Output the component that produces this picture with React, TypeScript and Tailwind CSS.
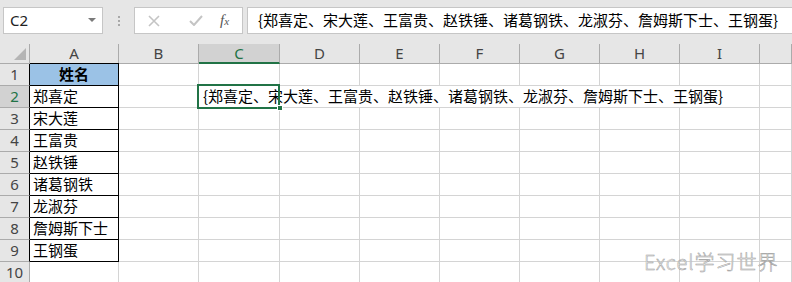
import React from "react";

const cols = ["A", "B", "C", "D", "E", "F", "G", "H", "I", ""];
const names = ["郑喜定", "宋大莲", "王富贵", "赵铁锤", "诸葛钢铁", "龙淑芬", "詹姆斯下士", "王钢蛋"];
const joined = "{" + names.join("、") + "}";

const cjk = "font-['Microsoft_YaHei','Noto_Sans_CJK_SC',sans-serif]";
const ui = "font-['Noto_Sans','Segoe_UI',sans-serif]";

function Cell({ row, col }: { row: number; col: number }) {
  // col 0 = A
  if (col === 0 && row <= 9) {
    return (
      <div
        className={`border-r border-b border-black flex items-center text-[15px] text-black ${cjk} ${
          row === 1 ? "bg-[#9bc2e6] font-bold justify-center border-t -mt-px" : "pl-[3px]"
        }`}
      >
        {row === 1 ? "姓名" : names[row - 2]}
      </div>
    );
  }
  if (row === 2 && col === 2) {
    return (
      <div className="relative border-b border-[#d4d4d4] overflow-visible">
        <div className={`absolute left-[4px] top-0 h-full flex items-center whitespace-nowrap text-[15px] text-black z-10 ${cjk}`}>
          {joined}
        </div>
        <div className="absolute -left-[2px] -top-[2px] w-[83px] h-[25px] border-2 border-[#217346] z-20" />
        <div className="absolute left-[78px] top-[19px] w-[6px] h-[6px] bg-[#217346] border border-white z-30" />
      </div>
    );
  }
  const hideRight = row === 2 && col >= 2 && col <= 7;
  return (
    <div
      className={`border-b border-[#d4d4d4] ${hideRight ? "" : "border-r"} ${
        col === 0 ? "border-[#d4d4d4]" : ""
      }`}
    />
  );
}

export default function App() {
  return (
    <div className="w-[792px] h-[282px] overflow-hidden bg-white relative">
      {/* formula bar */}
      <div className="h-[44px] bg-[#e6e6e6] flex items-start pt-[7px] pl-[3px]">
        <div className={`w-[100px] h-[27px] bg-white border border-[#c6c6c6] flex items-center justify-between pl-[6px] pr-[6px] text-[15px] text-[#222] ${ui}`}>
          <span>C2</span>
          <svg width="8" height="5" viewBox="0 0 8 5">
            <path d="M0 0h8L4 4z" fill="#7a7a7a" />
          </svg>
        </div>
        <div className="w-[31px] h-[27px] flex flex-col items-center justify-center gap-[2px]">
          <span className="w-[2px] h-[2px] bg-[#a8a8a8]" />
          <span className="w-[2px] h-[2px] bg-[#a8a8a8]" />
          <span className="w-[2px] h-[2px] bg-[#a8a8a8]" />
        </div>
        <div className="w-[109px] h-[27px] bg-white border border-[#c6c6c6] flex items-center">
          <svg className="ml-[13px]" width="12" height="12" viewBox="0 0 12 12">
            <path d="M1 1l10 10M11 1L1 11" stroke="#c4c4c4" strokeWidth="1.6" />
          </svg>
          <svg className="ml-[29px]" width="14" height="11" viewBox="0 0 14 11">
            <path d="M1 6l4 4 8-9" stroke="#c4c4c4" strokeWidth="2" fill="none" />
          </svg>
          <span className="ml-[17px] text-[15px] italic text-[#555] font-['Liberation_Serif',serif] leading-none">
            f<span className="text-[11px]">x</span>
          </span>
        </div>
        <div className={`ml-[4px] flex-1 h-[27px] bg-white border border-[#c6c6c6] border-r-0 flex items-center pl-[10px] whitespace-nowrap text-[15px] text-black ${cjk}`}>
          {joined}
        </div>
      </div>

      {/* sheet */}
      <div className="grid grid-cols-[30px_89px_80px_81px_80px_80px_80px_80px_80px_80px_1fr] grid-rows-[20px_repeat(10,22px)]">
        <div className="bg-[#e6e6e6] border-r border-b border-[#ababab] flex items-end justify-end pr-[3px] pb-[3px]">
          <svg width="12" height="12" viewBox="0 0 12 12">
            <path d="M12 0V12H0z" fill="#b5b5b5" />
          </svg>
        </div>
        {cols.map((c, i) => (
          <div
            key={"h" + i}
            className={`flex items-center justify-center text-[15px] ${ui} ${
              c === "C"
                ? "bg-[#d2d2d2] text-[#217346] border-b-2 border-b-[#217346] border-r border-r-[#ababab]"
                : "bg-[#e6e6e6] text-[#444] border-b border-r border-[#ababab]"
            } ${i === 0 ? "border-b-black" : ""}`}
          >
            {c}
          </div>
        ))}
        {Array.from({ length: 10 }, (_, r) => {
          const row = r + 1;
          return (
            <React.Fragment key={"r" + row}>
              <div
                className={`flex items-center justify-center text-[15px] border-b border-[#ababab] border-r ${ui} ${
                  row === 2 ? "bg-[#d2d2d2] text-[#217346]" : "bg-[#e6e6e6] text-[#444]"
                } ${row <= 9 ? "border-r-black" : ""}`}
              >
                {row}
              </div>
              {cols.map((_, ci) => (
                <Cell key={row + "-" + ci} row={row} col={ci} />
              ))}
            </React.Fragment>
          );
        })}
      </div>

      {/* watermark */}
      <div className="absolute left-[644px] top-[247px] text-[20px] font-light text-white font-['Noto_Sans_CJK_SC',sans-serif] [-webkit-text-stroke:0.5px_#9a9a9a] tracking-[1px] z-40">
        Excel学习世界
      </div>
    </div>
  );
}
